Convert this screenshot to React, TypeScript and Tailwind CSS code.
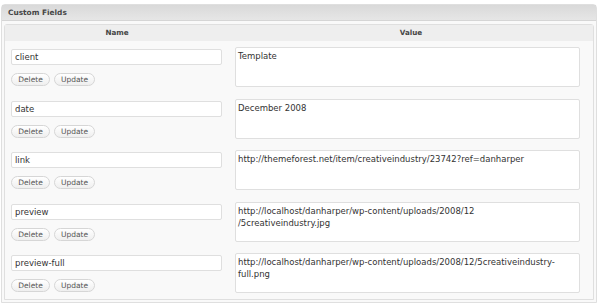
import React from "react";

type Field = { name: string; value: string[] };

const fields: Field[] = [
  { name: "client", value: ["Template"] },
  { name: "date", value: ["December 2008"] },
  { name: "link", value: ["http://themeforest.net/item/creativeindustry/23742?ref=danharper"] },
  {
    name: "preview",
    value: ["http://localhost/danharper/wp-content/uploads/2008/12", "/5creativeindustry.jpg"],
  },
  {
    name: "preview-full",
    value: ["http://localhost/danharper/wp-content/uploads/2008/12/5creativeindustry-", "full.png"],
  },
];

function SmallButton({ label, width }: { label: string; width: string }) {
  return (
    <button
      className={`${width} h-[13px] rounded-full border border-[#d6d6d6] bg-gradient-to-b from-white to-[#efefef] text-[7.5px] leading-[11px] text-[#555] flex items-center justify-center`}
    >
      {label}
    </button>
  );
}

function FieldRow({ field }: { field: Field }) {
  return (
    <div className="flex h-[51.5px] pt-[6px]">
      <div className="w-[224px] pl-[6px] pt-[2px]">
        <div className="w-[211px] h-[16px] rounded-[2px] border border-[#dfdfdf] bg-white pl-[3px] text-[8.5px] leading-[14px] text-[#333]">
          {field.name}
        </div>
        <div className="flex gap-[4px] mt-[8px]">
          <SmallButton label="Delete" width="w-[39px]" />
          <SmallButton label="Update" width="w-[41px]" />
        </div>
      </div>
      <div className="pl-[6px]">
        <div className="w-[345px] h-[40px] rounded-[2px] border border-[#dfdfdf] bg-white pl-[2px] pt-[2px] text-[8.5px] leading-[12px] text-[#333]">
          {field.value.map((line, i) => (
            <div key={i}>{line}</div>
          ))}
        </div>
      </div>
    </div>
  );
}

export default function App() {
  return (
    <div
      className="w-[600px] h-[303px] bg-white pt-[4px] pl-[1px] overflow-hidden"
      style={{ fontFamily: '"DejaVu Sans", Verdana, sans-serif' }}
    >
      <div className="w-[596px] h-[299px] rounded-t-[4px] border border-[#dfdfdf] bg-[#f9f9f9]">
        <div className="h-[16px] bg-gradient-to-b from-[#d9d9d9] to-[#e6e6e6] border-b border-[#d5d5d5] pl-[6px] text-[7.4px] leading-[15px] font-bold text-[#464646]">
          Custom Fields
        </div>
        <div className="mt-[3px] ml-[2px] w-[590px] h-[276px] rounded-t-[3px] border border-[#dfdfdf] bg-[#f9f9f9]">
          <div className="flex h-[16px] bg-[#eeeeee] text-[7.2px] leading-[16px] font-bold text-[#464646]">
            <div className="w-[224px] text-center">Name</div>
            <div className="flex-1 text-center">Value</div>
          </div>
          {fields.map((f) => (
            <FieldRow key={f.name} field={f} />
          ))}
        </div>
      </div>
    </div>
  );
}
